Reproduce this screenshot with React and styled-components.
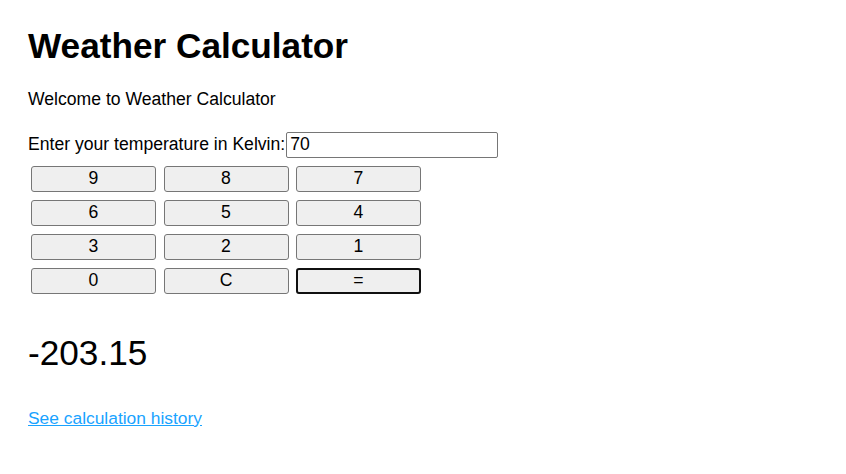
import React from "react";
import styled, { createGlobalStyle } from "styled-components";

const GlobalStyle = createGlobalStyle`
  body {
    margin: 0;
    background: #fff;
    color: #000;
    font-family: "Liberation Sans", Arial, sans-serif;
  }
`;

const Page = styled.div`
  padding: 26px 28px;
  font-size: 17.6px;
`;

const Title = styled.h1`
  margin: 0;
  font-size: 35.2px;
  line-height: 39px;
  font-weight: bold;
`;

const Welcome = styled.p`
  margin: 23.6px 0 0;
  line-height: 20px;
`;

const InputRow = styled.div`
  display: flex;
  align-items: center;
  gap: 1px;
  margin-top: 23.4px;
  height: 26px;
`;

const TempInput = styled.input`
  box-sizing: border-box;
  width: 212px;
  height: 26px;
  padding: 0 3px;
  border: 1px solid #767676;
  border-radius: 2px;
  font-family: inherit;
  font-size: 17.6px;
  color: #000;
  outline: none;
`;

const Keypad = styled.div`
  display: grid;
  grid-template-columns: repeat(3, 125px);
  column-gap: 7.5px;
  row-gap: 8px;
  margin-top: 8px;
  padding-left: 3px;
`;

const Key = styled.button`
  box-sizing: border-box;
  height: 26px;
  padding: 0;
  background: #efefef;
  border: ${({ $focused }) => ($focused ? "2px solid #101010" : "1px solid #767676")};
  border-radius: 3px;
  font-family: inherit;
  font-size: 17.6px;
  color: #000;
`;

const Result = styled.div`
  margin-top: 39px;
  font-size: 35.2px;
  line-height: 39px;
`;

const HistoryLink = styled.a`
  display: inline-block;
  margin-top: 36px;
  font-size: 17.4px;
  line-height: 20px;
  color: #19a3ff;
  text-decoration: underline;
`;

const keys = ["9", "8", "7", "6", "5", "4", "3", "2", "1", "0", "C", "="];

const App = () => {
  return (
    <>
      <GlobalStyle />
      <Page>
        <Title>Weather Calculator</Title>
        <Welcome>Welcome to Weather Calculator</Welcome>
        <InputRow>
          <label htmlFor="kelvin">Enter your temperature in Kelvin:</label>
          <TempInput id="kelvin" type="text" defaultValue="70" />
        </InputRow>
        <Keypad>
          {keys.map((k) => (
            <Key key={k} $focused={k === "="}>
              {k}
            </Key>
          ))}
        </Keypad>
        <Result>-203.15</Result>
        <HistoryLink href="#">See calculation history</HistoryLink>
      </Page>
    </>
  );
};

export default App;
